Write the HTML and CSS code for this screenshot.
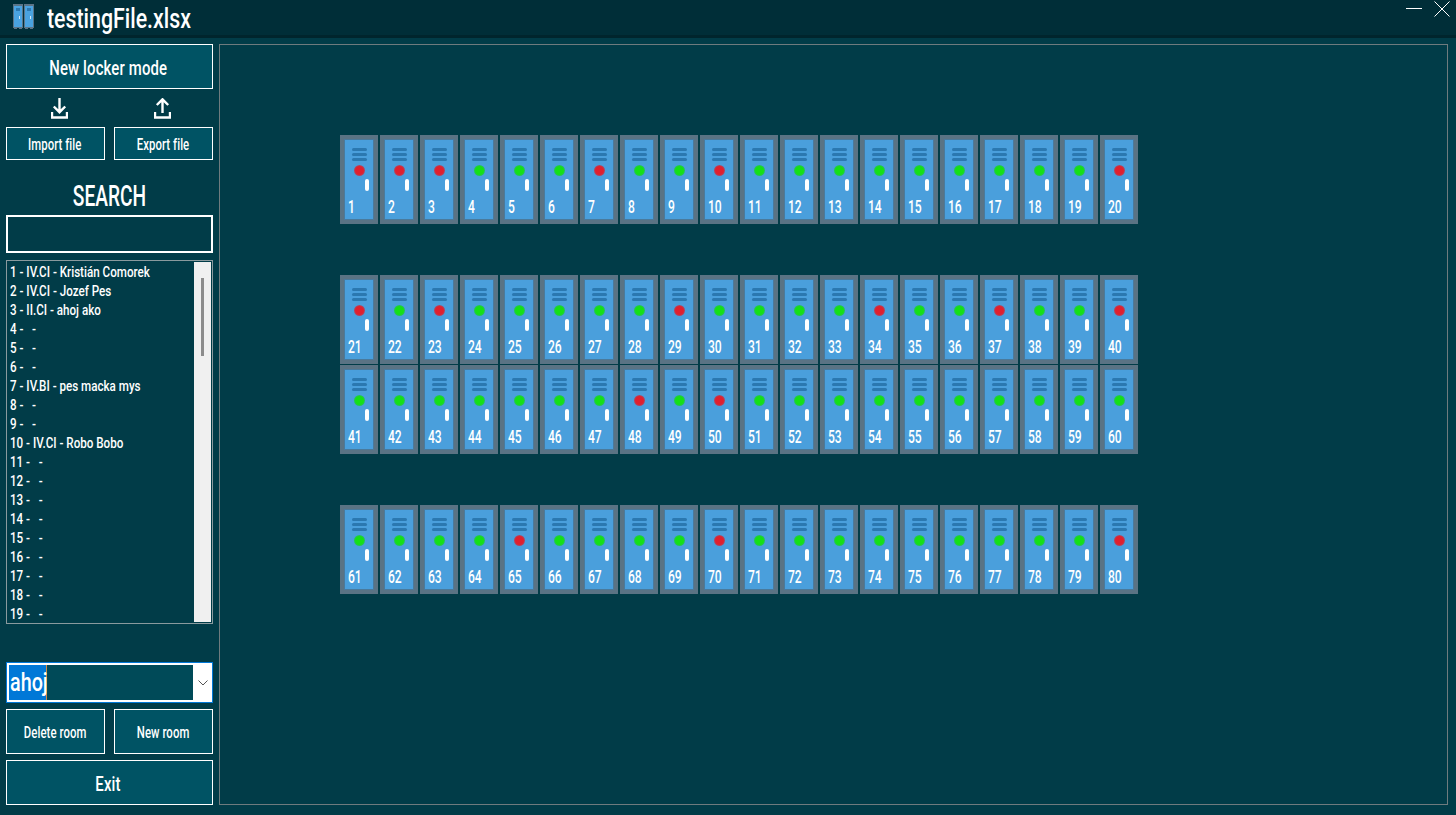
FILE: index.html
```html
<!DOCTYPE html>
<html lang="en">
<head>
<meta charset="utf-8">
<title>testingFile.xlsx</title>
<link rel="stylesheet" href="styles.css">
</head>
<body>
<header class="titlebar">
  <svg class="app-icon" width="21" height="25" viewBox="0 0 21 25">
    <rect x="0" y="0" width="10" height="24" fill="#5b7486"/>
    <rect x="11" y="0" width="10" height="24" fill="#5b7486"/>
    <rect x="1" y="2" width="8" height="21" fill="#4aa3e0"/>
    <rect x="12" y="2" width="8" height="21" fill="#4aa3e0"/>
    <rect x="3" y="4" width="4" height="3" fill="#2b78b0"/>
    <rect x="14" y="4" width="4" height="3" fill="#2b78b0"/>
    <rect x="6" y="12" width="1" height="3" fill="#cfe8f8"/>
    <rect x="17" y="12" width="1" height="3" fill="#cfe8f8"/>
    <rect x="1" y="24" width="3" height="1" fill="#5b7486"/>
    <rect x="6" y="24" width="3" height="1" fill="#5b7486"/>
    <rect x="12" y="24" width="3" height="1" fill="#5b7486"/>
    <rect x="17" y="24" width="3" height="1" fill="#5b7486"/>
  </svg>
  <h1 class="title"><span class="t t-title">testingFile.xlsx</span></h1>
  <div class="window-controls">
    <svg width="16" height="3" viewBox="0 0 16 3"><path d="M0 1.500H16" stroke="#fff" stroke-width="1"/></svg>
    <svg width="16" height="16" viewBox="0 0 16 16"><path d="M.5.5L15.500 15.500M15.500.5L.5 15.500" stroke="#fff" stroke-width="1"/></svg>
  </div>
</header>
<div class="main">
  <aside class="sidebar">
    <button class="btn btn-large"><span class="t t-large">New locker mode</span></button>
    <div class="icon-row">
      <svg width="17" height="21" viewBox="0 0 17 21"><path d="M8.500 0V14M2.800 8.500L8.500 14.200L14.200 8.500M1 14V19.500H16V14" fill="none" stroke="#fff" stroke-width="2.400"/></svg>
      <svg width="17" height="21" viewBox="0 0 17 21"><path d="M8.500 15V1.500M2.800 7L8.500 1.300L14.200 7M1 14V19.500H16V14" fill="none" stroke="#fff" stroke-width="2.400"/></svg>
    </div>
    <div class="btn-row file-row">
      <button class="btn btn-small"><span class="t t-small">Import file</span></button>
      <button class="btn btn-small"><span class="t t-small">Export file</span></button>
    </div>
    <h2 class="search-label"><span class="t t-search">SEARCH</span></h2>
    <div class="search-box"></div>
    <div class="list">
      <ul class="list-items">
        <li>1 - IV.CI - Kristián Comorek</li>
        <li>2 - IV.CI - Jozef Pes</li>
        <li>3 - II.CI - ahoj ako</li>
        <li>4 -&nbsp;&nbsp; -</li>
        <li>5 -&nbsp;&nbsp; -</li>
        <li>6 -&nbsp;&nbsp; -</li>
        <li>7 - IV.BI - pes macka mys</li>
        <li>8 -&nbsp;&nbsp; -</li>
        <li>9 -&nbsp;&nbsp; -</li>
        <li>10 - IV.CI - Robo Bobo</li>
        <li>11 -&nbsp;&nbsp; -</li>
        <li>12 -&nbsp;&nbsp; -</li>
        <li>13 -&nbsp;&nbsp; -</li>
        <li>14 -&nbsp;&nbsp; -</li>
        <li>15 -&nbsp;&nbsp; -</li>
        <li>16 -&nbsp;&nbsp; -</li>
        <li>17 -&nbsp;&nbsp; -</li>
        <li>18 -&nbsp;&nbsp; -</li>
        <li>19 -&nbsp;&nbsp; -</li>
      </ul>
      <div class="scrollbar"><div class="thumb"></div></div>
    </div>
    <div class="combo">
      <div class="combo-field"><span class="combo-selected"><span class="t t-combo">ahoj</span></span></div>
      <div class="combo-arrow">
        <svg width="10" height="6" viewBox="0 0 10 6"><path d="M.5.5L5 5L9.500.5" fill="none" stroke="#555" stroke-width="1"/></svg>
      </div>
    </div>
    <div class="btn-row room-row">
      <button class="btn btn-small"><span class="t t-small">Delete room</span></button>
      <button class="btn btn-small"><span class="t t-small">New room</span></button>
    </div>
    <button class="btn btn-large"><span class="t t-large">Exit</span></button>
  </aside>
  <section class="canvas">
    <div class="locker-row">
      <div class="locker"><i class="light red"></i><span>1</span></div>
      <div class="locker"><i class="light red"></i><span>2</span></div>
      <div class="locker"><i class="light red"></i><span>3</span></div>
      <div class="locker"><i class="light"></i><span>4</span></div>
      <div class="locker"><i class="light"></i><span>5</span></div>
      <div class="locker"><i class="light"></i><span>6</span></div>
      <div class="locker"><i class="light red"></i><span>7</span></div>
      <div class="locker"><i class="light"></i><span>8</span></div>
      <div class="locker"><i class="light"></i><span>9</span></div>
      <div class="locker"><i class="light red"></i><span>10</span></div>
      <div class="locker"><i class="light"></i><span>11</span></div>
      <div class="locker"><i class="light"></i><span>12</span></div>
      <div class="locker"><i class="light"></i><span>13</span></div>
      <div class="locker"><i class="light"></i><span>14</span></div>
      <div class="locker"><i class="light"></i><span>15</span></div>
      <div class="locker"><i class="light"></i><span>16</span></div>
      <div class="locker"><i class="light"></i><span>17</span></div>
      <div class="locker"><i class="light"></i><span>18</span></div>
      <div class="locker"><i class="light"></i><span>19</span></div>
      <div class="locker"><i class="light red"></i><span>20</span></div>
    </div>
    <div class="locker-row row-gap">
      <div class="locker"><i class="light red"></i><span>21</span></div>
      <div class="locker"><i class="light"></i><span>22</span></div>
      <div class="locker"><i class="light red"></i><span>23</span></div>
      <div class="locker"><i class="light"></i><span>24</span></div>
      <div class="locker"><i class="light"></i><span>25</span></div>
      <div class="locker"><i class="light"></i><span>26</span></div>
      <div class="locker"><i class="light"></i><span>27</span></div>
      <div class="locker"><i class="light"></i><span>28</span></div>
      <div class="locker"><i class="light red"></i><span>29</span></div>
      <div class="locker"><i class="light"></i><span>30</span></div>
      <div class="locker"><i class="light"></i><span>31</span></div>
      <div class="locker"><i class="light"></i><span>32</span></div>
      <div class="locker"><i class="light"></i><span>33</span></div>
      <div class="locker"><i class="light red"></i><span>34</span></div>
      <div class="locker"><i class="light"></i><span>35</span></div>
      <div class="locker"><i class="light"></i><span>36</span></div>
      <div class="locker"><i class="light red"></i><span>37</span></div>
      <div class="locker"><i class="light"></i><span>38</span></div>
      <div class="locker"><i class="light"></i><span>39</span></div>
      <div class="locker"><i class="light red"></i><span>40</span></div>
    </div>
    <div class="locker-row row-tight">
      <div class="locker"><i class="light"></i><span>41</span></div>
      <div class="locker"><i class="light"></i><span>42</span></div>
      <div class="locker"><i class="light"></i><span>43</span></div>
      <div class="locker"><i class="light"></i><span>44</span></div>
      <div class="locker"><i class="light"></i><span>45</span></div>
      <div class="locker"><i class="light"></i><span>46</span></div>
      <div class="locker"><i class="light"></i><span>47</span></div>
      <div class="locker"><i class="light red"></i><span>48</span></div>
      <div class="locker"><i class="light"></i><span>49</span></div>
      <div class="locker"><i class="light red"></i><span>50</span></div>
      <div class="locker"><i class="light"></i><span>51</span></div>
      <div class="locker"><i class="light"></i><span>52</span></div>
      <div class="locker"><i class="light"></i><span>53</span></div>
      <div class="locker"><i class="light"></i><span>54</span></div>
      <div class="locker"><i class="light"></i><span>55</span></div>
      <div class="locker"><i class="light"></i><span>56</span></div>
      <div class="locker"><i class="light"></i><span>57</span></div>
      <div class="locker"><i class="light"></i><span>58</span></div>
      <div class="locker"><i class="light"></i><span>59</span></div>
      <div class="locker"><i class="light"></i><span>60</span></div>
    </div>
    <div class="locker-row row-gap">
      <div class="locker"><i class="light"></i><span>61</span></div>
      <div class="locker"><i class="light"></i><span>62</span></div>
      <div class="locker"><i class="light"></i><span>63</span></div>
      <div class="locker"><i class="light"></i><span>64</span></div>
      <div class="locker"><i class="light red"></i><span>65</span></div>
      <div class="locker"><i class="light"></i><span>66</span></div>
      <div class="locker"><i class="light"></i><span>67</span></div>
      <div class="locker"><i class="light"></i><span>68</span></div>
      <div class="locker"><i class="light"></i><span>69</span></div>
      <div class="locker"><i class="light red"></i><span>70</span></div>
      <div class="locker"><i class="light"></i><span>71</span></div>
      <div class="locker"><i class="light"></i><span>72</span></div>
      <div class="locker"><i class="light"></i><span>73</span></div>
      <div class="locker"><i class="light"></i><span>74</span></div>
      <div class="locker"><i class="light"></i><span>75</span></div>
      <div class="locker"><i class="light"></i><span>76</span></div>
      <div class="locker"><i class="light"></i><span>77</span></div>
      <div class="locker"><i class="light"></i><span>78</span></div>
      <div class="locker"><i class="light"></i><span>79</span></div>
      <div class="locker"><i class="light red"></i><span>80</span></div>
    </div>
  </section>
</div>
</body>
</html>
```

FILE: styles.css
```css
* { box-sizing: border-box; }
html, body { margin: 0; height: 100%; overflow: hidden; }
body {
  background: #013c48;
  color: #fff;
  font-family: Roboto, "Liberation Sans", sans-serif;
  font-weight: 400;
  display: flex;
  flex-direction: column;
}
.t { display: inline-block; white-space: nowrap; }
.t-title { transform: scaleX(.79); transform-origin: left center; }
.t-large { transform: scaleX(.745); letter-spacing: .2px; }
.t-small { transform: scaleX(.71); letter-spacing: .1px; }
.t-search { transform: scaleX(.66); }
.t-combo { transform: scaleX(.76); transform-origin: left center; }
.titlebar {
  height: 38px;
  flex: none;
  background: #002e38;
  border-bottom: 3px solid #00252d;
  display: flex;
  align-items: flex-start;
  padding: 4px 0 0 13px;
}
.app-icon { flex: none; }
.title {
  margin: -1px 0 0 13px;
  font-size: 27px;
  line-height: 32px;
  font-weight: 500;
}
.window-controls {
  margin-left: auto;
  margin-top: -3px;
  padding-right: 6px;
  display: flex;
  gap: 12px;
  align-items: flex-start;
}
.window-controls svg { display: block; }
.window-controls svg:first-child { margin-top: 6px; }
.main {
  flex: 1;
  display: flex;
  padding: 6px 8px 10px 6px;
  gap: 6px;
  min-height: 0;
}
.sidebar {
  width: 207px;
  flex: none;
  display: flex;
  flex-direction: column;
}
.btn {
  background: #005364;
  color: #fff;
  border: 1px solid #fff;
  border-radius: 0;
  font-family: inherit;
  font-weight: 500;
  padding: 2px 1px 0 0;
  display: block;
}
.btn-large { height: 45px; width: 100%; font-size: 20px; flex: none; padding-right: 3px; }
.btn-small { width: 99px; font-size: 16px; }
.icon-row {
  height: 38px;
  flex: none;
  display: flex;
  justify-content: space-between;
  padding: 9px 42px 0 45px;
}
.btn-row { display: flex; justify-content: space-between; flex: none; }
.file-row { height: 33px; }
.room-row { height: 45px; margin: 6px 0; }
.search-label {
  margin: 21px 0 0;
  height: 34px;
  font-size: 29px;
  line-height: 30px;
  font-weight: 500;
  text-align: center;
}
.search-box {
  height: 38px;
  flex: none;
  border: 2px solid #fff;
}
.list {
  margin-top: 7px;
  height: 364px;
  flex: none;
  display: flex;
  border: 1px solid #fff;
  outline: 1px solid #8a9a9e;
  outline-offset: -1px;
  padding: 1px;
  background: #013c48;
}
.list-items {
  list-style: none;
  margin: 0;
  padding: 1px 0 0 2px;
  flex: 1;
  overflow: hidden;
  font-size: 15px;
  font-weight: 500;
  line-height: 19px;
}
.list-items li {
  white-space: nowrap;
  height: 19px;
  transform: scaleX(.775);
  transform-origin: left center;
}
.scrollbar {
  width: 17px;
  flex: none;
  background: #f0f0f0;
  padding: 16px 0 0 7px;
}
.thumb { width: 3px; height: 78px; background: #8c8c8c; }
.combo {
  margin-top: 38px;
  height: 41px;
  flex: none;
  display: flex;
  background: #fff;
  border: 1px solid #0078d7;
  padding: 2px 0 2px 2px;
}
.combo-field {
  flex: 1;
  background: #004a58;
  font-size: 26px;
  font-weight: 500;
  line-height: 34px;
  overflow: hidden;
}
.combo-selected {
  display: block;
  width: 38px;
  height: 35px;
  background: #0078d7;
  border-right: 1px solid #c98a4a;
  padding-left: 1px;
}
.combo-arrow {
  width: 19px;
  flex: none;
  display: flex;
  align-items: center;
  justify-content: center;
}
.canvas {
  flex: 1;
  border: 1px solid #6f7b7e;
  padding: 90px 0 0 120px;
  min-width: 0;
}
.locker-row { display: flex; gap: 2px; }
.row-gap { margin-top: 51px; }
.row-tight { margin-top: 1px; }
.locker {
  width: 38px;
  height: 89px;
  flex: none;
  background: #4a9fdc;
  box-shadow: inset 0 0 0 4px #5a7384, inset 0 0 0 5px #4a7a9c;
  position: relative;
}
.locker > span {
  position: absolute;
  left: 8px;
  top: 61px;
  font-size: 18px;
  font-weight: 500;
  line-height: 21px;
  transform: scaleX(.67);
  transform-origin: left center;
}
.locker::before {
  content: "";
  position: absolute;
  left: 12px;
  top: 13px;
  width: 15px;
  height: 3px;
  border-radius: 2px;
  background: #2b78b0;
  box-shadow: 0 5px 0 #2b78b0, 0 10px 0 #2b78b0;
}
.locker::after {
  content: "";
  position: absolute;
  left: 25px;
  top: 44px;
  width: 4px;
  height: 12px;
  border-radius: 2px;
  background: #fff;
}
.light {
  position: absolute;
  left: 14px;
  top: 30px;
  width: 11px;
  height: 11px;
  border-radius: 50%;
  background: radial-gradient(circle, #15e015 0 50%, rgba(30, 190, 60, .55) 80%, rgba(30, 190, 60, 0) 100%);
}
.light.red { background: radial-gradient(circle, #e01f2d 0 50%, rgba(190, 50, 70, .55) 80%, rgba(190, 50, 70, 0) 100%); }
```
